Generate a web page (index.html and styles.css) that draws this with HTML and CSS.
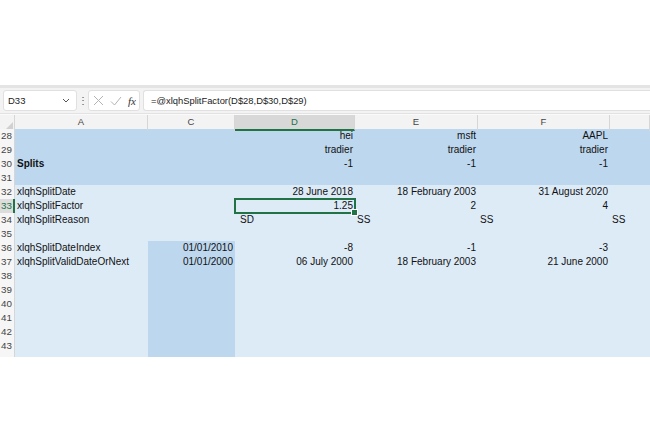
FILE: index.html
```html
<!DOCTYPE html>
<html lang="en">
<head>
    <meta charset="UTF-8">
    <title>Splits</title>
    <link rel="stylesheet" href="styles.css">
</head>
<body>
    <div class="top-space"></div>

    <div class="formula-bar">
        <div class="name-box">
            <span>D33</span>
            <svg class="chevron" width="8" height="5" viewBox="0 0 8 5"><path d="M1 1 L4 4 L7 1" fill="none" stroke="#555" stroke-width="1"/></svg>
        </div>
        <div class="bar-dots">⋮</div>
        <div class="bar-icons">
            <svg width="11" height="11" viewBox="0 0 11 11"><path d="M1 1 L10 10 M10 1 L1 10" stroke="#b4b4b4" stroke-width="1"/></svg>
            <svg width="12" height="10" viewBox="0 0 12 10"><path d="M1 5.5 L4.5 9 L11 1" fill="none" stroke="#b4b4b4" stroke-width="1"/></svg>
            <span class="fx">fx</span>
        </div>
        <div class="formula-input">=@xlqhSplitFactor(D$28,D$30,D$29)</div>
    </div>

    <div class="sheet">
        <div class="row col-head">
            <div class="corner"><svg width="7" height="7" viewBox="0 0 7 7"><path d="M7 0 L7 7 L0 7 Z" fill="#d0d0d0"/></svg></div>
            <div>A</div>
            <div>C</div>
            <div class="active">D</div>
            <div>E</div>
            <div>F</div>
            <div></div>
        </div>

        <div class="row band">
            <div class="rh">28</div><div></div><div></div>
            <div class="num">hei</div><div class="num">msft</div><div class="num">AAPL</div><div></div>
        </div>
        <div class="row band">
            <div class="rh">29</div><div></div><div></div>
            <div class="num">tradier</div><div class="num">tradier</div><div class="num">tradier</div><div></div>
        </div>
        <div class="row band">
            <div class="rh">30</div><div class="bold">Splits</div><div></div>
            <div class="num">-1</div><div class="num">-1</div><div class="num">-1</div><div></div>
        </div>
        <div class="row band">
            <div class="rh">31</div><div></div><div></div><div></div><div></div><div></div><div></div>
        </div>

        <div class="row">
            <div class="rh">32</div><div>xlqhSplitDate</div><div></div>
            <div class="num">28 June 2018</div><div class="num">18 February 2003</div><div class="num">31 August 2020</div><div></div>
        </div>
        <div class="row">
            <div class="rh active">33</div><div>xlqhSplitFactor</div><div></div>
            <div class="num selected">1.25</div><div class="num">2</div><div class="num">4</div><div></div>
        </div>
        <div class="row">
            <div class="rh">34</div><div>xlqhSplitReason</div><div></div>
            <div class="pad">SD</div><div>SS</div><div>SS</div><div>SS</div>
        </div>
        <div class="row">
            <div class="rh">35</div><div></div><div></div><div></div><div></div><div></div><div></div>
        </div>
        <div class="row">
            <div class="rh">36</div><div>xlqhSplitDateIndex</div><div class="num dark">01/01/2010</div>
            <div class="num">-8</div><div class="num">-1</div><div class="num">-3</div><div></div>
        </div>
        <div class="row">
            <div class="rh">37</div><div>xlqhSplitValidDateOrNext</div><div class="num dark">01/01/2000</div>
            <div class="num">06 July 2000</div><div class="num">18 February 2003</div><div class="num">21 June 2000</div><div></div>
        </div>
        <div class="row"><div class="rh">38</div><div></div><div class="dark"></div><div></div><div></div><div></div><div></div></div>
        <div class="row"><div class="rh">39</div><div></div><div class="dark"></div><div></div><div></div><div></div><div></div></div>
        <div class="row"><div class="rh">40</div><div></div><div class="dark"></div><div></div><div></div><div></div><div></div></div>
        <div class="row"><div class="rh">41</div><div></div><div class="dark"></div><div></div><div></div><div></div><div></div></div>
        <div class="row"><div class="rh">42</div><div></div><div class="dark"></div><div></div><div></div><div></div><div></div></div>
        <div class="row"><div class="rh">43</div><div></div><div class="dark"></div><div></div><div></div><div></div><div></div></div>
        <div class="row"><div class="rh">44</div><div></div><div class="dark"></div><div></div><div></div><div></div><div></div></div>
    </div>
</body>
</html>
```

FILE: styles.css
```css
:root {
    --band: #bdd7ee;
    --light: #ddebf7;
    --green: #217346;
    --head-bg: #f3f3f3;
    --head-line: #d6d6d6;
}

* {
    margin: 0;
    padding: 0;
    box-sizing: border-box;
}

body {
    background: #ffffff;
    font-family: 'Liberation Sans', Arial, sans-serif;
    color: #111;
}

.top-space {
    height: 85px;
}

/* formula bar */
.formula-bar {
    display: flex;
    align-items: center;
    height: 29px;
    padding: 0 0 0 3px;
    background: #f3f3f3;
    border-top: 3px solid #e4e4e4;
    border-bottom: 1px solid #e2e2e2;
}

.name-box {
    display: flex;
    align-items: center;
    justify-content: space-between;
    width: 74px;
    height: 21px;
    padding: 0 6px 0 4px;
    background: #fff;
    border: 1px solid #e0e0e0;
    border-radius: 3px;
    font-size: 9.5px;
    color: #222;
}

.bar-dots {
    width: 11px;
    text-align: center;
    font-size: 10px;
    color: #555;
}

.bar-icons {
    display: flex;
    align-items: center;
    gap: 6px;
    width: 52px;
    height: 21px;
    padding-left: 4px;
    background: #fff;
    border: 1px solid #e0e0e0;
    border-radius: 3px;
}

.fx {
    font-family: 'Liberation Serif', serif;
    font-style: italic;
    font-size: 11px;
    color: #333;
}

.formula-input {
    flex: 1;
    height: 21px;
    margin-left: 3px;
    padding: 0 7px;
    line-height: 20px;
    background: #fff;
    border: 1px solid #e0e0e0;
    border-right: none;
    border-radius: 3px 0 0 3px;
    font-size: 9.4px;
    color: #222;
}

/* sheet */
.sheet {
    height: 243px;
    overflow: hidden;
    background: var(--light);
}

.row {
    display: grid;
    grid-template-columns: 15px 133px 87px 120px 123px 132px 1fr;
    height: 14px;
    font-size: 10px;
    line-height: 14px;
}

.row > div {
    padding: 0 2px;
    white-space: nowrap;
}

.band {
    background: var(--band);
}

.col-head {
    height: 15px;
    background: var(--head-bg);
    line-height: 14px;
    font-size: 9.5px;
    color: #444;
    border-top: 1px solid #fafafa;
}

.col-head > div {
    text-align: center;
    border-right: 1px solid var(--head-line);
}

.col-head .active {
    background: #d8d8d8;
    color: var(--green);
    border-bottom: 2px solid var(--green);
}

.corner {
    display: flex;
    align-items: flex-end;
    justify-content: flex-end;
    padding: 0 1px 2px 0 !important;
}

.rh {
    background: #f6f6f6;
    border-right: 1px solid var(--head-line);
    font-size: 9.8px;
    color: #444;
    padding: 0 0 0 1px !important;
}

.rh.active {
    background: #dcdcdc;
    color: var(--green);
    border-right: 2px solid var(--green);
}

.num {
    text-align: right;
}

.bold {
    font-weight: bold;
}

.dark {
    background: var(--band);
}

.pad {
    padding-left: 5px !important;
}

.selected {
    position: relative;
    outline: 2px solid var(--green);
    outline-offset: -1px;
}

.selected::after {
    content: "";
    position: absolute;
    right: -3px;
    bottom: -3px;
    width: 5px;
    height: 5px;
    background: var(--green);
    border: 1px solid #fff;
}
```
